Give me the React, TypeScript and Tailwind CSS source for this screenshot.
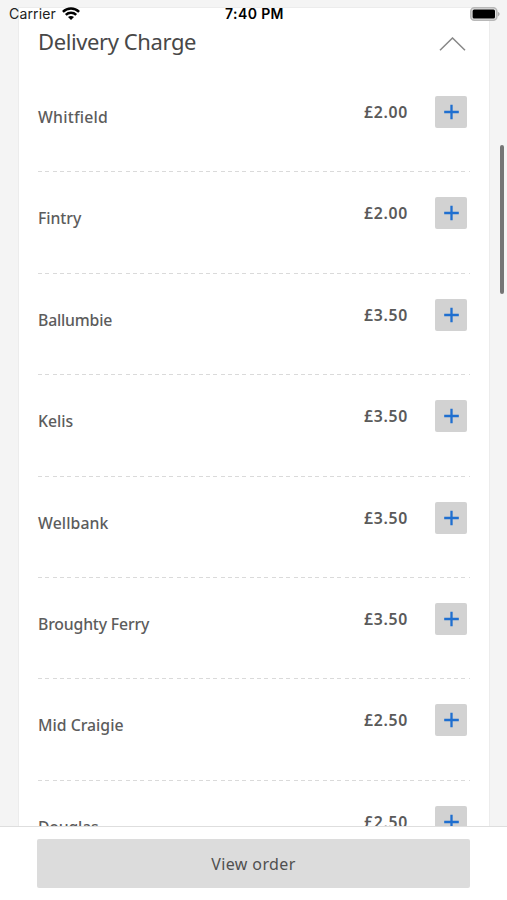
import React from "react";

const areas = [
  { name: "Whitfield", price: "£2.00", spacing: "tracking-[0.200px]" },
  { name: "Fintry", price: "£2.00", spacing: "tracking-[-0.050px]" },
  { name: "Ballumbie", price: "£3.50", spacing: "tracking-[-0.200px]" },
  { name: "Kelis", price: "£3.50", spacing: "tracking-[0px]" },
  { name: "Wellbank", price: "£3.50", spacing: "tracking-[0.100px]" },
  { name: "Broughty Ferry", price: "£3.50", spacing: "tracking-[-0.180px]" },
  { name: "Mid Craigie", price: "£2.50", spacing: "tracking-[0px]" },
  { name: "Douglas", price: "£2.50", spacing: "tracking-[-0.200px]" },
];

function StatusBar() {
  return (
    <div className="absolute top-0 left-0 w-full h-[27px] pl-[9px] pr-[7px] grid grid-cols-[1fr_auto_1fr] items-center text-black font-['Inter',sans-serif]">
      <div className="flex items-center gap-[6px]">
        <span className="text-[14px] leading-[27px] tracking-[0.150px] text-[#222]">Carrier</span>
        <svg className="w-[18px] h-[13px]" viewBox="0 0 18 13" fill="none" stroke="currentColor" strokeWidth="2.5">
          <path d="M.9 4.800C5.500.4 12.500.4 17.100 4.800" />
          <path d="M3.800 7.900C6.700 5.100 11.300 5.100 14.200 7.900" />
          <path d="M6 10C7.700 8.500 10.300 8.500 12 10L9 13Z" fill="currentColor" stroke="none" />
        </svg>
      </div>
      <span className="text-[14px] leading-[27px] font-semibold tracking-[0.400px]">7:40 PM</span>
      <svg className="w-[30px] h-[14px] justify-self-end" viewBox="0 0 30 14" fill="none">
        <rect x="0.800" y="0.800" width="26" height="12.400" rx="3.500" fill="#e4e4e4" stroke="#b8b8b8" strokeWidth="1.600" />
        <rect x="2.600" y="2.500" width="22.400" height="9" rx="1.500" fill="#000" />
        <path d="M27.800 4.800V9.400C30.200 8.500 30.200 5.700 27.800 4.800Z" fill="#adadad" />
      </svg>
    </div>
  );
}

function AreaRow({ name, price, spacing }: { name: string; price: string; spacing: string }) {
  return (
    <li className="h-[101.400px] shrink-0 flex flex-col justify-between">
      <div className="flex items-start pt-[25px] pr-[3px]">
        <span className={`flex-1 pt-[9px] text-[15.800px] leading-[24px] font-medium text-[#5c5c5c] ${spacing}`}>{name}</span>
        <span className="pt-[4px] mr-[27px] text-[15.800px] leading-[24px] font-semibold tracking-[0.700px] text-[#5a5a5a]">
          {price}
        </span>
        <button className="w-8 h-8 rounded-[2px] bg-[#d2d2d2] flex items-center justify-center" aria-label={`Add ${name}`}>
          <svg className="w-4 h-4" viewBox="0 0 16 16" stroke="#1f6fd0" strokeWidth="2.300">
            <path d="M8.500 .8V15.200M1.200 8H15.800" />
          </svg>
        </button>
      </div>
      <div className="h-px bg-[repeating-linear-gradient(90deg,#dadada_0_4px,transparent_4px_7.300px)]" />
    </li>
  );
}

export default function App() {
  return (
    <div className="relative w-full h-[900px] overflow-hidden flex flex-col bg-white font-['Noto_Sans',sans-serif]">
      <main className="h-[826px] shrink-0 overflow-hidden bg-[#f4f4f4] pt-[7px] pl-[18px] pr-[17px]">
        <section className="h-[900px] flex flex-col bg-white border border-[#ececec] pl-[19px] pr-[19px]">
          <header className="h-[63px] shrink-0 flex items-start justify-between pr-[4px]">
            <h2 className="pt-[17px] text-[22px] leading-[32px] tracking-[-0.400px] text-[#484848]">Delivery Charge</h2>
            <svg className="w-[27px] h-[14px] mt-[29px]" viewBox="0 0 27 14" fill="none" stroke="#888" strokeWidth="1.500">
              <path d="M1 13.300L13.500 1L26 13.300" />
            </svg>
          </header>
          <ul className="flex flex-col">
            {areas.map((area) => (
              <AreaRow key={area.name} {...area} />
            ))}
          </ul>
        </section>
      </main>
      <footer className="flex-1 border-t border-[#dedede] bg-white pt-[12px] px-[37px]">
        <button className="w-full h-[49px] rounded-[2px] bg-[#dcdcdc] text-[16px] tracking-[0.400px] text-[#505050]">View order</button>
      </footer>
      <StatusBar />
      <div className="absolute right-[3px] top-[145px] w-[4px] h-[149px] rounded-full bg-[#757575]" />
    </div>
  );
}
